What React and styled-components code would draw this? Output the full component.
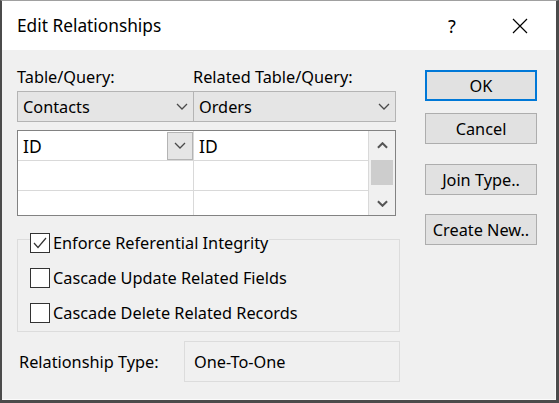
import React from "react";
import styled, { createGlobalStyle } from "styled-components";

const GlobalStyle = createGlobalStyle`
  html, body {
    margin: 0;
    padding: 0;
    background: #ffffff;
  }
  body {
    font-family: "Noto Sans", "Segoe UI", sans-serif;
  }
  * {
    box-sizing: border-box;
  }
`;

const Window = styled.div`
  width: 559px;
  height: 403px;
  display: flex;
  flex-direction: column;
  background: #f0f0f0;
  border-style: solid;
  border-color: #4b4b4b;
  border-top-color: #a0a0a0;
  border-width: 1px 3px 3px 2px;
  box-shadow: inset -1px -1px 0 #fbfbfb;
  color: #000;
  font-size: 16.3px;
  line-height: 22px;
  overflow: hidden;
`;

const TitleBar = styled.div`
  flex: none;
  height: 49px;
  display: flex;
  align-items: center;
  padding: 0 13px 0 15px;
  background: #ffffff;
`;

const Title = styled.div`
  flex: 1;
  font-size: 17.3px;
`;

const CaptionButton = styled.div`
  width: ${(p) => p.w}px;
  height: 100%;
  margin-right: ${(p) => p.gap || 0}px;
  display: flex;
  align-items: center;
  justify-content: center;
  font-size: 18px;
`;

const Body = styled.div`
  flex: 1;
  display: flex;
  gap: 25px;
  padding: 16px 0 0 15px;
`;

const LeftColumn = styled.div`
  width: 383px;
  display: flex;
  flex-direction: column;
`;

const LabelRow = styled.div`
  display: grid;
  grid-template-columns: 176px 1fr;
  height: 22px;
`;

const ComboRow = styled.div`
  display: flex;
  width: 379px;
  margin-top: 3px;
`;

const Combo = styled.div`
  width: ${(p) => p.w}px;
  height: 31px;
  margin-left: ${(p) => (p.joined ? -1 : 0)}px;
  display: flex;
  align-items: center;
  justify-content: space-between;
  padding: 0 5px 0 5px;
  background: #e5e5e5;
  border: 1px solid #b4b4b4;
`;

const Grid = styled.div`
  width: 379px;
  height: 86px;
  margin-top: 8px;
  display: flex;
  border: 1px solid #828282;
  background: #ffffff;
  overflow: hidden;
`;

const Table = styled.div`
  flex: 1;
  display: flex;
  flex-direction: column;
`;

const Row = styled.div`
  flex: none;
  height: 30px;
  display: grid;
  grid-template-columns: 176px 1fr;
  border-bottom: 1px solid #d9d9d9;
`;

const Cell = styled.div`
  display: flex;
  align-items: center;
  padding-left: 5px;
  border-right: 1px solid #d9d9d9;
  font-size: 17.5px;
`;

const CellDrop = styled.div`
  margin-left: auto;
  width: 26px;
  height: 28px;
  display: flex;
  align-items: center;
  justify-content: center;
  background: #e5e5e5;
  border: 1px solid #b4b4b4;
`;

const Scrollbar = styled.div`
  width: 26px;
  display: flex;
  flex-direction: column;
  background: #f0f0f0;
`;

const ScrollArrow = styled.div`
  height: ${(p) => p.h}px;
  display: flex;
  align-items: center;
  justify-content: center;
`;

const Thumb = styled.div`
  height: 25px;
  margin: 0 2px 0 2px;
  background: #cdcdcd;
`;

const Track = styled.div`
  flex: 1;
`;

const Group = styled.fieldset`
  width: 383px;
  margin: 9px 0 0 0;
  padding: 0 12px 8px 12px;
  border: 1px solid #dcdcdc;
  min-inline-size: 0;
`;

const Legend = styled.legend`
  padding: 8px 1px 0 0;
`;

const CheckRow = styled.label`
  height: 20px;
  margin-top: ${(p) => p.mt || 0}px;
  display: flex;
  align-items: center;
  gap: 3px;
  line-height: 20px;
`;

const Box = styled.span`
  flex: none;
  width: 20px;
  height: 20px;
  display: flex;
  align-items: center;
  justify-content: center;
  background: #ffffff;
  border: 1px solid #333333;
`;

const TypeRow = styled.div`
  margin-top: 9px;
  display: flex;
  align-items: center;
`;

const TypeLabel = styled.div`
  width: 167px;
  padding-left: 2px;
`;

const TypeValue = styled.div`
  width: 216px;
  height: 41px;
  display: flex;
  align-items: center;
  padding-left: 9px;
  border: 1px solid #dcdcdc;
`;

const RightColumn = styled.div`
  width: 112px;
  padding-top: 4px;
  display: flex;
  flex-direction: column;
`;

const Button = styled.div`
  height: 31px;
  margin-top: ${(p) => p.mt || 0}px;
  display: flex;
  align-items: center;
  justify-content: center;
  background: #e1e1e1;
  border: ${(p) => (p.primary ? "2px solid #0078d7" : "1px solid #adadad")};
`;

const Chevron = ({ up, w = 12, h = 7, stroke = "#4a4a4a", sw = 1.3 }) => (
  <svg width={w} height={h} viewBox="0 0 12 7">
    <path
      d={up ? "M1 6 L6 1 L11 6" : "M1 1 L6 6 L11 1"}
      fill="none"
      stroke={stroke}
      strokeWidth={sw}
    />
  </svg>
);

const Check = () => (
  <svg width="18" height="18" viewBox="0 0 18 18">
    <path d="M3 9 L7 13.5 L15 4" fill="none" stroke="#333" strokeWidth="1.2" />
  </svg>
);

const CloseIcon = () => (
  <svg width="16" height="16" viewBox="0 0 16 16">
    <path d="M1 1 L15 15 M15 1 L1 15" stroke="#000" strokeWidth="1.2" />
  </svg>
);

const CheckOption = ({ checked, children, mt }) => (
  <CheckRow mt={mt}>
    <Box>{checked && <Check />}</Box>
    {children}
  </CheckRow>
);

export default function App() {
  return (
    <>
      <GlobalStyle />
      <Window>
        <TitleBar>
          <Title>Edit Relationships</Title>
          <CaptionButton w={40} gap={25}>?</CaptionButton>
          <CaptionButton w={46}>
            <CloseIcon />
          </CaptionButton>
        </TitleBar>
        <Body>
          <LeftColumn>
            <LabelRow>
              <span>Table/Query:</span>
              <span>Related Table/Query:</span>
            </LabelRow>
            <ComboRow>
              <Combo w={177}>
                Contacts
                <Chevron />
              </Combo>
              <Combo w={203} joined>
                Orders
                <Chevron />
              </Combo>
            </ComboRow>
            <Grid>
              <Table>
                <Row>
                  <Cell>
                    ID
                    <CellDrop>
                      <Chevron />
                    </CellDrop>
                  </Cell>
                  <Cell>ID</Cell>
                </Row>
                <Row>
                  <Cell />
                  <Cell />
                </Row>
                <Row>
                  <Cell />
                  <Cell />
                </Row>
              </Table>
              <Scrollbar>
                <ScrollArrow h={29}>
                  <Chevron up w={11} h={7} stroke="#555" sw={2.2} />
                </ScrollArrow>
                <Thumb />
                <Track />
                <ScrollArrow h={24}>
                  <Chevron w={11} h={7} stroke="#555" sw={2.2} />
                </ScrollArrow>
              </Scrollbar>
            </Grid>
            <Group>
              <Legend>
                <CheckOption checked>Enforce Referential Integrity</CheckOption>
              </Legend>
              <CheckOption mt={15}>Cascade Update Related Fields</CheckOption>
              <CheckOption mt={15}>Cascade Delete Related Records</CheckOption>
            </Group>
            <TypeRow>
              <TypeLabel>Relationship Type:</TypeLabel>
              <TypeValue>One-To-One</TypeValue>
            </TypeRow>
          </LeftColumn>
          <RightColumn>
            <Button primary>OK</Button>
            <Button mt={12}>Cancel</Button>
            <Button mt={20}>Join Type..</Button>
            <Button mt={19}>Create New..</Button>
          </RightColumn>
        </Body>
      </Window>
    </>
  );
}
